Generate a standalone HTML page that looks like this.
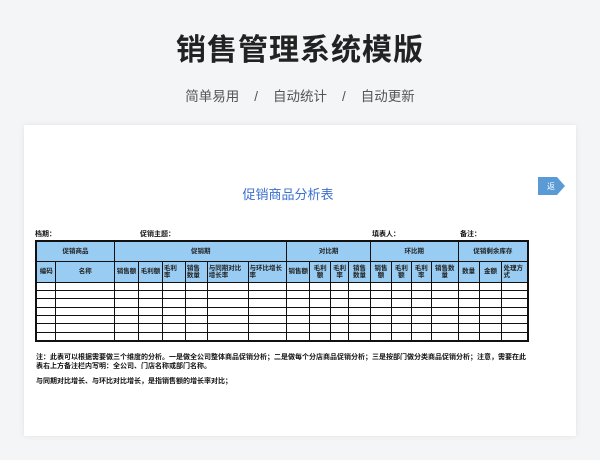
<html><head><style>
body{margin:0;width:600px;height:460px;background:#f4f5f7;font-family:"Liberation Sans","Noto Sans CJK SC",sans-serif;position:relative;overflow:hidden}
.a{position:absolute}
.card{left:24px;top:125px;width:552px;height:311px;background:#fff;box-shadow:0 0 6px rgba(0,0,0,.08)}
.t{font-size:7px;color:#111;font-weight:bold;white-space:nowrap}
table{border-collapse:collapse;position:absolute;left:35px;top:240px;width:494px;font-family:"Liberation Sans","Noto Sans CJK SC",sans-serif}
td{border:1px solid #111;font-size:6.5px;font-weight:bold;color:#222;padding:0 1px;line-height:7px;text-align:center}
.b{height:8.4px}
.b td{height:8.4px;padding:0;line-height:1px;font-size:1px}
.h td{background:#99ccf3}
table{border:2px solid #111}
</style></head><body>
<div class="a" style="left:0;width:600px;top:25px;text-align:center;font-size:30px;font-weight:bold;color:#222;letter-spacing:1px">销售管理系统模版</div>
<div class="a" style="left:0;width:600px;top:85px;text-align:center;font-size:13.5px;color:#555">简单易用&nbsp;&nbsp;&nbsp;&nbsp;/&nbsp;&nbsp;&nbsp;&nbsp;自动统计&nbsp;&nbsp;&nbsp;&nbsp;/&nbsp;&nbsp;&nbsp;&nbsp;自动更新</div>
<div class="a card"></div>
<svg class="a" style="left:538px;top:177px" width="28" height="18"><path d="M0 0H19L27 9L19 18H0Z" fill="#5b9bd5"/><text x="9" y="12" font-size="8" fill="#fff" font-family="Noto Sans CJK SC">返</text></svg>
<div class="a" style="left:0;width:576px;top:184px;text-align:center;font-size:13px;color:#3b6fd0">促销商品分析表</div>
<div class="a t" style="left:35px;top:229px">档期：</div>
<div class="a t" style="left:140px;top:229px">促销主题：</div>
<div class="a t" style="left:372px;top:229px">填表人：</div>
<div class="a t" style="left:460px;top:229px">备注：</div>
<table>
<colgroup><col style="width:20px"><col style="width:59px"><col style="width:24px"><col style="width:24px"><col style="width:23px"><col style="width:22px"><col style="width:41px"><col style="width:39px"><col style="width:23px"><col style="width:21px"><col style="width:18px"><col style="width:22px"><col style="width:21px"><col style="width:20px"><col style="width:20px"><col style="width:27px"><col style="width:21px"><col style="width:23px"><col style="width:26px"></colgroup>
<tr class="h" style="height:20px"><td colspan="2">促销商品</td><td colspan="6">促销期</td><td colspan="4">对比期</td><td colspan="4">环比期</td><td colspan="3">促销剩余库存</td></tr>
<tr class="h" style="height:21px"><td>编码</td><td>名称</td><td>销售额</td><td>毛利额</td><td style="text-align:left">毛利<br>率</td><td style="text-align:left">销售<br>数量</td><td style="text-align:left">与同期对比<br>增长率</td><td style="text-align:left">与环比增长<br>率</td><td>销售额</td><td>毛利<br>额</td><td>毛利<br>率</td><td>销售<br>数量</td><td>销售<br>额</td><td>毛利<br>额</td><td>毛利<br>率</td><td>销售数<br>量</td><td>数量</td><td>金额</td><td style="text-align:left">处理方<br>式</td></tr>
<tr class="b"><td></td><td></td><td></td><td></td><td></td><td></td><td></td><td></td><td></td><td></td><td></td><td></td><td></td><td></td><td></td><td></td><td></td><td></td><td></td></tr>
<tr class="b"><td></td><td></td><td></td><td></td><td></td><td></td><td></td><td></td><td></td><td></td><td></td><td></td><td></td><td></td><td></td><td></td><td></td><td></td><td></td></tr>
<tr class="b"><td></td><td></td><td></td><td></td><td></td><td></td><td></td><td></td><td></td><td></td><td></td><td></td><td></td><td></td><td></td><td></td><td></td><td></td><td></td></tr>
<tr class="b"><td></td><td></td><td></td><td></td><td></td><td></td><td></td><td></td><td></td><td></td><td></td><td></td><td></td><td></td><td></td><td></td><td></td><td></td><td></td></tr>
<tr class="b"><td></td><td></td><td></td><td></td><td></td><td></td><td></td><td></td><td></td><td></td><td></td><td></td><td></td><td></td><td></td><td></td><td></td><td></td><td></td></tr>
<tr class="b"><td></td><td></td><td></td><td></td><td></td><td></td><td></td><td></td><td></td><td></td><td></td><td></td><td></td><td></td><td></td><td></td><td></td><td></td><td></td></tr>
<tr class="b"><td></td><td></td><td></td><td></td><td></td><td></td><td></td><td></td><td></td><td></td><td></td><td></td><td></td><td></td><td></td><td></td><td></td><td></td><td></td></tr>
</table>
<div class="a t" style="left:36px;top:353px;width:496px;white-space:normal;line-height:9px;font-size:7px">注：此表可以根据需要做三个维度的分析。一是做全公司整体商品促销分析；二是做每个分店商品促销分析；三是按部门做分类商品促销分析；注意，需要在此表右上方备注栏内写明：全公司、门店名称或部门名称。</div>
<div class="a t" style="left:36px;top:376px;font-size:7px">与同期对比增长、与环比对比增长，是指销售额的增长率对比；</div>
</body></html>
